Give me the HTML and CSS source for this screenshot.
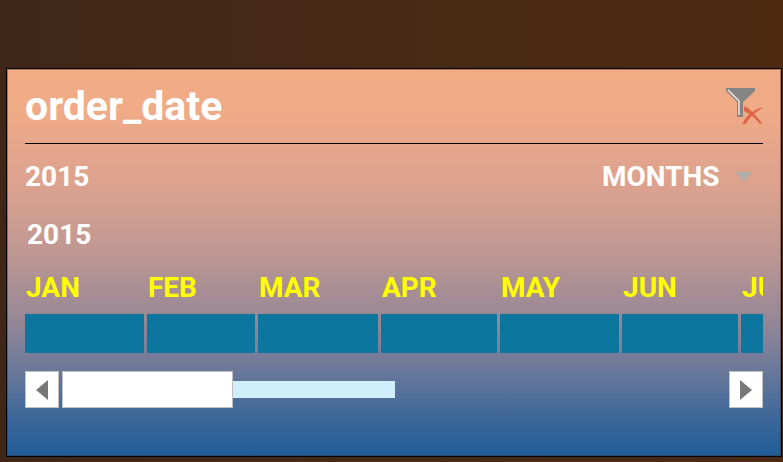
FILE: index.html
```html
<!DOCTYPE html>
<html lang="en">
<head>
<meta charset="utf-8">
<meta name="viewport" content="width=device-width, initial-scale=1">
<title>order_date</title>
<link rel="stylesheet" href="styles.css">
</head>
<body>
<main class="timeline">
  <header class="header">
    <h1 class="title">order_date</h1>
    <button class="clear" type="button" aria-label="Clear filter">
      <svg width="38" height="38" viewBox="0 0 38 38" aria-hidden="true">
        <path d="M1 1H30V4L18 15V30H12V15L1 4Z" fill="#858585"/>
        <path d="M3 3L14 14V28" fill="none" stroke="#f2e4dc" stroke-width="1.5"/>
        <path d="M19 20C20 19 22 20 24 22C29 26 33 31 37 36L35 37C31 32 27 28 19 24Z" fill="#df6445"/>
        <path d="M37 21C31 24 25 29 21 36L18 37C21 29 29 23 37 21Z" fill="#df6445" stroke="#df6445"/>
      </svg>
    </button>
  </header>
  <div class="summary">
    <span>2015</span>
    <label class="level">
      <select class="level-select" aria-label="Time level">
        <option>MONTHS</option>
      </select>
      <svg class="caret" width="16" height="10" viewBox="0 0 16 10" aria-hidden="true"><path d="M0 0H16L8 9Z" fill="#adadad"/></svg>
    </label>
  </div>
  <div class="year">2015</div>
  <div class="months">
    <button class="month" type="button"><span class="name">JAN</span><span class="bar"></span></button>
    <button class="month" type="button"><span class="name">FEB</span><span class="bar"></span></button>
    <button class="month" type="button"><span class="name">MAR</span><span class="bar"></span></button>
    <button class="month" type="button"><span class="name">APR</span><span class="bar"></span></button>
    <button class="month" type="button"><span class="name">MAY</span><span class="bar"></span></button>
    <button class="month" type="button"><span class="name">JUN</span><span class="bar"></span></button>
    <button class="month" type="button"><span class="name">JU</span><span class="bar"></span></button>
  </div>
  <div class="scroll">
    <button class="box arrow" type="button" aria-label="Scroll left"><svg width="12" height="20" viewBox="0 0 12 20" aria-hidden="true"><path d="M12 0V20L0 10Z" fill="#777"/></svg></button>
    <div class="track">
      <div class="box thumb"></div>
      <div class="range"></div>
    </div>
    <button class="box arrow" type="button" aria-label="Scroll right"><svg width="12" height="20" viewBox="0 0 12 20" aria-hidden="true"><path d="M0 0V20L12 10Z" fill="#777"/></svg></button>
  </div>
</main>
</body>
</html>
```
FILE: styles.css
```css
* {
  box-sizing: border-box;
}

body {
  margin: 0;
  padding: 68px 1px 4px 6px;
  min-height: 100vh;
  background: linear-gradient(to right, #402617, #462a16 45%, #4e2a12);
  color: #fff;
  font: bold 28px/36px Roboto, sans-serif;
}

button {
  padding: 0;
  border: 0;
  background: none;
  color: inherit;
  font: inherit;
}

.timeline {
  padding: 0 18px 48px;
  border: 1px solid #000;
  box-shadow: inset 0 0 0 1px rgba(60, 40, 30, 0.4);
  background: linear-gradient(#f2ac86, #efaa87 12%, #e5a68b 20%, #d7a090 34%, #bb9692 49%, #9b8996 63%, #7b7e99 73%, #5b739a 82%, #3d6799 90%, #205d9a);
}

.header {
  display: flex;
  justify-content: space-between;
  align-items: center;
  height: 75px;
  border-bottom: 1px solid #000;
}

.title {
  margin: 0;
  font-size: 41px;
  line-height: 48px;
}

.clear svg,
.arrow svg {
  display: block;
}

.summary {
  display: flex;
  justify-content: space-between;
  margin-top: 15px;
}

.level {
  display: flex;
  align-items: center;
  gap: 16px;
  padding-right: 11px;
}

.level-select {
  appearance: none;
  padding: 0;
  border: 0;
  background: none;
  color: inherit;
  font: inherit;
}

.year {
  margin-top: 22px;
  padding-left: 2px;
}

.months {
  display: grid;
  grid-template-columns: 119fr 108fr 120fr 116fr 119fr 116fr 22fr;
  gap: 3px;
  margin-top: 17px;
}

.month {
  min-width: 0;
  text-align: left;
}

.name {
  display: block;
  overflow: hidden;
  margin: 0 0 8px 1px;
  color: #ff0;
  white-space: nowrap;
}

.bar {
  display: block;
  height: 39px;
  background: #0c769f;
}

.scroll {
  display: flex;
  gap: 3px;
  margin-top: 18px;
}

.box {
  border: 1px solid #c0c0c0;
  background: #fff;
}

.arrow {
  display: grid;
  flex: none;
  place-items: center;
  width: 34px;
  height: 37px;
}

.track {
  display: flex;
  flex: 1;
  align-items: center;
}

.thumb {
  width: 171px;
  height: 37px;
}

.range {
  width: 162px;
  height: 17px;
  background: #cfeffc;
}
```
